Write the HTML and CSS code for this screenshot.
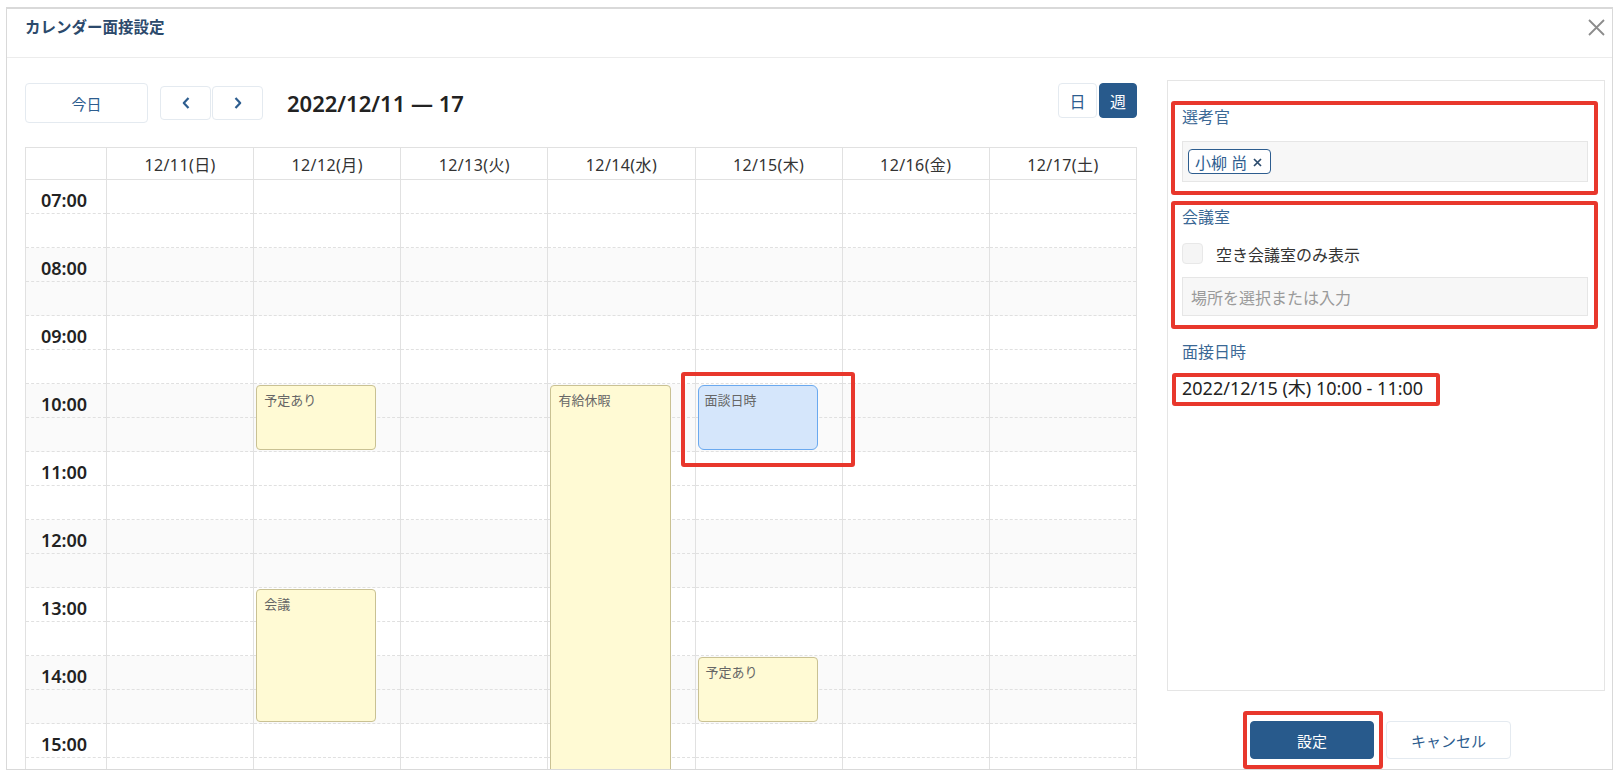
FILE: index.html
```html
<!DOCTYPE html>
<html lang="ja">
<head>
  <meta charset="UTF-8" />
  <meta name="viewport" content="width=device-width, initial-scale=1.0"/>
  <title>カレンダー面接設定</title>
  <link rel="stylesheet" href="styles.css">
</head>
<body>
  <div class="dialog">
    <div class="dialog-header">
      <div class="dialog-title">カレンダー面接設定</div>
      <button class="close" aria-label="閉じる">
        <svg width="17" height="17" viewBox="0 0 17 17"><path d="M1 1 L16 16 M16 1 L1 16" stroke="#8c8c8c" stroke-width="1.8" fill="none"/></svg>
      </button>
    </div>

    <div class="dialog-body">
      <div class="cal-pane">
        <div class="toolbar">
          <button class="btn today">今日</button>
          <div class="nav">
            <button class="btn nav-btn" aria-label="前へ">
              <svg width="8" height="12" viewBox="0 0 8 12"><path d="M6.5 1 L1.8 6 L6.5 11" stroke="#2d5d8f" stroke-width="2.2" fill="none" stroke-linejoin="round"/></svg>
            </button>
            <button class="btn nav-btn" aria-label="次へ">
              <svg width="8" height="12" viewBox="0 0 8 12"><path d="M1.5 1 L6.2 6 L1.5 11" stroke="#2d5d8f" stroke-width="2.2" fill="none" stroke-linejoin="round"/></svg>
            </button>
          </div>
          <div class="range">2022/12/11 — 17</div>
          <div class="view-toggle">
            <button class="btn view">日</button>
            <button class="btn view active">週</button>
          </div>
        </div>

        <div class="cal">
          <div class="cal-head">
            <div class="cal-corner"></div>
            <div class="cal-day">12/11(日)</div>
            <div class="cal-day">12/12(月)</div>
            <div class="cal-day">12/13(火)</div>
            <div class="cal-day">12/14(水)</div>
            <div class="cal-day">12/15(木)</div>
            <div class="cal-day">12/16(金)</div>
            <div class="cal-day">12/17(土)</div>
          </div>
          <div class="cal-scroll">
            <div class="cal-body" id="calBody"></div>
          </div>
        </div>
      </div>

      <div class="side">
        <div class="panel">
          <div class="field marked">
            <div class="field-label">選考官</div>
            <div class="input chips">
              <span class="chip">小柳 尚
                <svg class="chip-x" width="9" height="9" viewBox="0 0 9 9"><path d="M1 1 L8 8 M8 1 L1 8" stroke="#2a4a6c" stroke-width="1.7" fill="none"/></svg>
              </span>
            </div>
          </div>

          <div class="field marked room">
            <div class="field-label">会議室</div>
            <label class="check-row">
              <span class="checkbox"></span>
              <span>空き会議室のみ表示</span>
            </label>
            <div class="input place">場所を選択または入力</div>
          </div>

          <div class="field when">
            <div class="field-label">面接日時</div>
            <div class="when-value marked">2022/12/15 (木) 10:00 - 11:00</div>
          </div>
        </div>

        <div class="footer">
          <button class="btn primary marked">設定</button>
          <button class="btn cancel">キャンセル</button>
        </div>
      </div>
    </div>
  </div>

  <script>
    const START_HOUR = 7;
    const END_HOUR = 16;
    const HOUR = 68;

    const events = [
      { day: 1, start: 10, end: 11, title: '予定あり' },
      { day: 1, start: 13, end: 15, title: '会議' },
      { day: 3, start: 10, end: 16, title: '有給休暇' },
      { day: 4, start: 10, end: 11, title: '面談日時', type: 'interview', marked: true },
      { day: 4, start: 14, end: 15, title: '予定あり' }
    ];

    const body = document.getElementById('calBody');

    function buildColumn(isTime) {
      const col = document.createElement('div');
      col.className = isTime ? 'cal-col times' : 'cal-col';
      for (let h = START_HOUR; h < END_HOUR; h++) {
        for (let half = 0; half < 2; half++) {
          const slot = document.createElement('div');
          slot.className = 'slot' + ((h - START_HOUR) % 2 === 1 ? ' alt' : '');
          if (isTime && half === 0) {
            const label = document.createElement('span');
            label.className = 'hour';
            label.textContent = String(h).padStart(2, '0') + ':00';
            slot.appendChild(label);
          }
          col.appendChild(slot);
        }
      }
      return col;
    }

    body.appendChild(buildColumn(true));
    const cols = [];
    for (let d = 0; d < 7; d++) {
      const col = buildColumn(false);
      cols.push(col);
      body.appendChild(col);
    }

    events.forEach(function (ev) {
      const el = document.createElement('div');
      el.className = 'event' + (ev.type ? ' ' + ev.type : '') + (ev.marked ? ' marked' : '');
      el.style.top = ((ev.start - START_HOUR) * HOUR + 1) + 'px';
      el.style.height = ((ev.end - ev.start) * HOUR - 3) + 'px';
      el.textContent = ev.title;
      cols[ev.day].appendChild(el);
    });
  </script>
</body>
</html>
```

FILE: styles.css
```css
* {
  box-sizing: border-box;
}

body {
  margin: 0;
  background: #fff;
  font-family: "Noto Sans", "Noto Sans CJK JP", sans-serif;
  color: #333;
}

button {
  font-family: inherit;
  cursor: pointer;
}

.dialog {
  margin: 7px 0 0 6px;
  width: 1607px;
  height: 763px;
  border: 1px solid #d9d9d9;
  border-top-width: 2px;
  background: #fff;
  overflow: hidden;
  display: flex;
  flex-direction: column;
}

.dialog-header {
  height: 49px;
  flex-shrink: 0;
  display: flex;
  justify-content: space-between;
  align-items: flex-start;
  padding: 8px 7px 0 18px;
  border-bottom: 1px solid #ececec;
}

.dialog-title {
  font-size: 15.5px;
  line-height: 20px;
  font-weight: 700;
  color: #2c4a6c;
}

.close {
  border: none;
  background: none;
  padding: 0;
  margin-top: 2px;
  width: 17px;
  height: 17px;
}

.dialog-body {
  flex: 1;
  min-height: 0;
  display: flex;
  gap: 30px;
  padding: 22px 7px 0 18px;
}

/* calendar */

.cal-pane {
  width: 1112px;
  display: flex;
  flex-direction: column;
  padding-top: 3px;
}

.toolbar {
  height: 40px;
  display: flex;
  align-items: center;
  flex-shrink: 0;
}

.btn {
  background: #fff;
  border: 1px solid #e4eaf0;
  border-radius: 4px;
  color: #2d5d8f;
  font-size: 15px;
  padding: 0;
}

.today {
  width: 123px;
  height: 40px;
}

.nav {
  display: flex;
  gap: 1px;
  margin-left: 12px;
}

.nav-btn {
  width: 51px;
  height: 34px;
  display: flex;
  align-items: center;
  justify-content: center;
}

.range {
  margin-left: 24px;
  font-size: 22px;
  font-weight: 600;
  color: #222;
}

.view-toggle {
  margin-left: auto;
  align-self: flex-start;
  display: flex;
  gap: 2px;
}

.view {
  width: 39px;
  height: 35px;
  font-size: 16px;
}

.view.active {
  width: 38px;
  background: #285a8c;
  border-color: #285a8c;
  color: #fff;
}

.cal {
  margin-top: 24px;
  flex: 1;
  min-height: 0;
  display: flex;
  flex-direction: column;
}

.cal-head {
  display: grid;
  grid-template-columns: 80px repeat(7, 1fr);
  height: 33px;
  flex-shrink: 0;
  border: 1px solid #e1e1e1;
}

.cal-day {
  border-left: 1px solid #e1e1e1;
  display: flex;
  align-items: center;
  justify-content: center;
  font-size: 16px;
  letter-spacing: 0.4px;
  color: #333;
}

.cal-scroll {
  flex: 1;
  min-height: 0;
  overflow: hidden;
}

.cal-body {
  display: grid;
  grid-template-columns: 80px repeat(7, 1fr);
  border-left: 1px solid #e1e1e1;
  border-right: 1px solid #e1e1e1;
}

.cal-col {
  position: relative;
  border-left: 1px solid #e1e1e1;
}

.cal-col.times {
  border-left: none;
}

.slot {
  height: 34px;
  border-bottom: 1px dashed #e0e0e0;
}

.slot.alt {
  background: #fafafa;
}

.hour {
  display: block;
  padding: 9px 0 0 15px;
  font-size: 18px;
  line-height: 22px;
  font-weight: 600;
  color: #222;
}

.event {
  position: absolute;
  z-index: 1;
  left: 2px;
  right: 24px;
  background: #fffad4;
  border: 1px solid #c9c193;
  border-radius: 4px;
  padding: 5px 7px;
  font-size: 13px;
  line-height: 18px;
  color: #666;
}

.event.interview {
  z-index: 2;
  background: #d5e6fb;
  border-color: #6aa9ef;
  border-radius: 6px;
  padding: 5px 6px;
}

/* side panel */

.side {
  width: 438px;
  display: flex;
  flex-direction: column;
}

.panel {
  height: 611px;
  border: 1px solid #e5e5e5;
  padding: 26px 16px 0 14px;
}

.field {
  position: relative;
}

.field + .field {
  margin-top: 25px;
}

.field.when {
  margin-top: 26px;
}

.field-label {
  font-size: 16px;
  line-height: 20px;
  color: #3b6895;
}

.input {
  background: #f7f7f7;
  border: 1px solid #e6e6e6;
  display: flex;
  align-items: center;
}

.chips {
  margin-top: 14px;
  height: 41px;
  padding: 0 5px;
}

.chip {
  height: 25px;
  display: inline-flex;
  align-items: center;
  gap: 6px;
  padding: 0 8px 0 6px;
  border: 1px solid #2d5d8f;
  border-radius: 4px;
  background: #fff;
  color: #2d5d8f;
  font-size: 16px;
}

.chip-x {
  margin-top: 1px;
}

.check-row {
  margin-top: 16px;
  height: 21px;
  display: flex;
  align-items: center;
  gap: 13px;
  font-size: 16px;
  color: #333;
}

.checkbox {
  width: 21px;
  height: 21px;
  background: #f5f5f5;
  border: 1px solid #e8e8e8;
  border-radius: 4px;
}

.place {
  margin-top: 13px;
  height: 39px;
  padding: 0 8px;
  font-size: 16px;
  color: #9a9a9a;
}

.when-value {
  position: relative;
  display: inline-block;
  margin-top: 15px;
  font-size: 18px;
  line-height: 23px;
  color: #222;
}

.footer {
  margin-top: 30px;
  display: flex;
  justify-content: center;
  gap: 12px;
  padding-right: 11px;
}

.primary {
  position: relative;
  width: 124px;
  height: 38px;
  background: #285a8c;
  border-color: #285a8c;
  color: #fff;
}

.cancel {
  width: 125px;
  height: 38px;
}

/* red annotation frames */

.marked::after {
  content: '';
  position: absolute;
  border: 4px solid #e8372c;
  border-radius: 3px;
  pointer-events: none;
}

.field.marked::after {
  inset: -6px -10px -13px -11px;
}

.when-value.marked::after {
  inset: -4px -17px -6px -10px;
}

.primary.marked::after {
  inset: -11px -10px -11px -8px;
}

.event.marked::after {
  inset: -14px -38px -18px -18px;
}
```
